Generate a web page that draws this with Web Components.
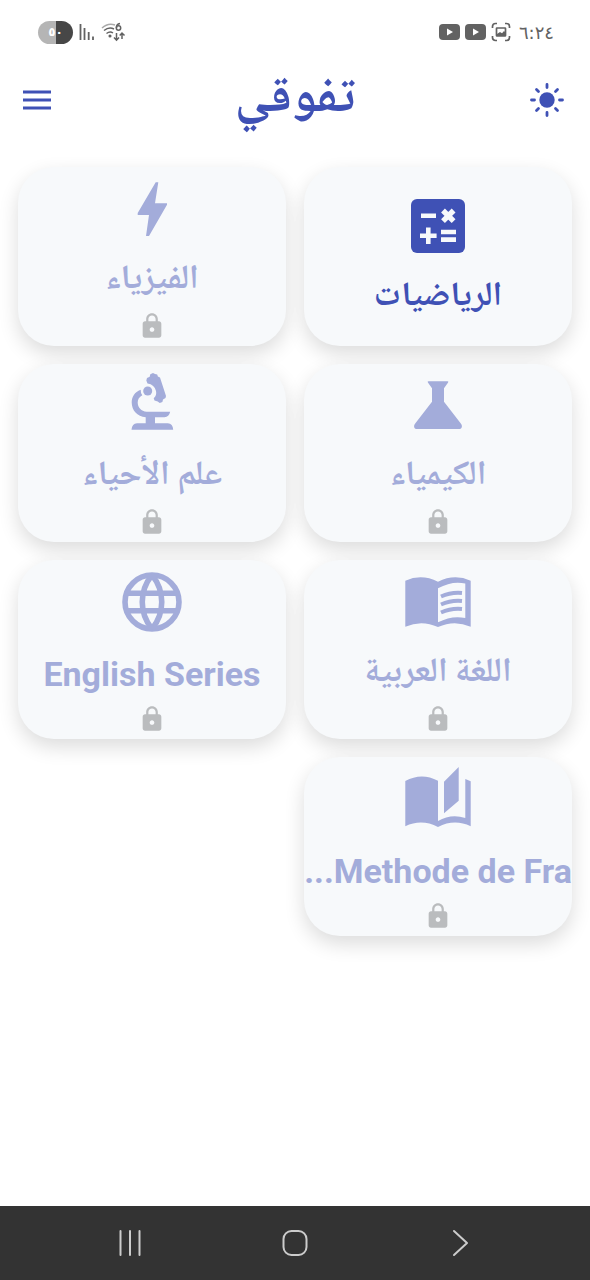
<!DOCTYPE html>
<html lang="ar" dir="rtl">
<head>
<meta charset="utf-8">
<meta name="viewport" content="width=device-width, initial-scale=1">
<title>تفوقي</title>
<style>
  body { margin: 0; background: #fff; font-family: Roboto, "Noto Naskh Arabic", "DejaVu Sans", sans-serif; }
</style>
</head>
<body>
<app-screen>
  <status-bar slot="status"></status-bar>
  <app-header slot="header">تفوقي</app-header>
  <subject-card icon="calc">الرياضيات</subject-card>
  <subject-card icon="bolt" locked>الفيزياء</subject-card>
  <subject-card icon="flask" locked>الكيمياء</subject-card>
  <subject-card icon="microscope" locked>علم الأحياء</subject-card>
  <subject-card icon="book" locked>اللغة العربية</subject-card>
  <subject-card icon="globe" locked latin>English Series</subject-card>
  <subject-card icon="stories" locked latin>...Methode de Fra</subject-card>
  <nav-bar slot="nav"></nav-bar>
</app-screen>

<script>
const define = (name, html, setup) => {
  const template = document.createElement('template');
  template.innerHTML = html;
  customElements.define(name, class extends HTMLElement {
    constructor() {
      super();
      this.attachShadow({ mode: 'open' }).append(template.content.cloneNode(true));
    }
    connectedCallback() { if (setup) setup(this, this.shadowRoot); }
  });
};

const ICONS = {
  calc: `<rect x="9" y="9" width="54" height="54" rx="6"/>
    <g fill="none" stroke="#f7f9fb" stroke-width="4.6"><path d="M19 25.7h15M39 42h15M39 49.6h15M18 45.7h16.6M26.3 37.4V54"/><path stroke-width="5.4" d="M41 20.5l10.6 10.6M51.6 20.5L41 31.1"/></g>`,
  bolt: `<path d="M39.7 9.3h2.6l-3.300 21H51v1.500L33 63h-3l3-21H21.700v-2z"/>`,
  flask: `<path d="M26.500 12.300h19q1.300 0 .6 1.200L42 19.300v13.400l17 22c2 2.900.5 5.300-2 5.300H15c-2.500 0-4-2.400-2-5.300l17-22V19.300l-4.100-5.800q-.7-1.200.6-1.200z"/>`,
  microscope: `<path d="M24.700 20.700C18.500 23 15.700 28 15.700 33.500c0 7.800 5.500 14 14 14.800v6H21q-5 .5-5.500 6.400H57.200q-.4-5.900-5.400-6.400H39v-6h9.500q4.500-.5 5.700-5.600H30.700c-5.500-.4-9-4.200-9-9.200q0-4.800 4.600-7.300-1.800-2.500-1.600-5.500z"/>
    <circle cx="31.700" cy="22" r="4.500"/>
    <path d="M31 9l2.700-1.200.6-2.600 2.700-1.300 2 1.200 2.200.5.700 2 2.100 1 6 18.500-.5 2-2.500 1.500-.6 2.500-2.700.8-2-1.500-3.200-.8-.8-2.300q3.300-3 2.300-7.300-1.500-6.500-8.500-7.500l-1.200-3z"/>`,
  book: `<path fill-rule="evenodd" d="M3.300 14.700Q19.500 7.500 36 15.700 52.500 7.500 68.700 14.700v46Q52.500 53.500 36 61 19.500 53.500 3.300 60.700zM36 22.300v34Q50 49 63.300 52V17.500Q50 14.500 36 22.300z"/>
    <g fill="none" stroke="currentColor" stroke-width="4"><path d="M39 30.500Q49 26 60 27M39 38.500Q49 34 60 35M39 46.500Q49 42 60 43"/></g>`,
  globe: `<g fill="none" stroke="currentColor" stroke-width="5.600"><circle cx="36" cy="36" r="27"/><path d="M11 27.300h50M11 44.700h50M36 9C23 25 23 47 36 63M36 9C49 25 49 47 36 63"/></g>`,
  stories: `<path d="M3.300 18Q19.500 9 36 17.700V58q13-7.500 27.300-3V16l5.400 2.300V63.300Q52.500 55.500 36 64 19.500 55.500 3.300 63.300zM42 18.700L56.700 4v33.700L42 50.300z"/>`
};

define('app-screen', `
  <style>
    :host { display: flex; flex-direction: column; min-height: 100vh; }
    main { flex: 1; display: grid; grid-template-columns: repeat(2, minmax(0, 1fr)); align-content: start; gap: 18px; padding: 31px 18px; }
  </style>
  <slot name="status"></slot>
  <slot name="header"></slot>
  <main><slot></slot></main>
  <slot name="nav"></slot>`);

define('status-bar', `
  <style>
    :host { display: flex; direction: ltr; justify-content: space-between; align-items: center; height: 64px; padding: 0 36px 0 38px; box-sizing: border-box; color: #626262; }
    div { display: flex; align-items: center; gap: 5px; }
    svg { display: block; }
    .battery { display: flex; align-items: center; justify-content: center; width: 35px; height: 23px; border-radius: 12px; color: #fff; background: linear-gradient(90deg, #b5b5b5 51%, #474747 51%); font: bold 12px "DejaVu Sans", sans-serif; }
    time { font: 18px "DejaVu Sans", sans-serif; margin-inline-start: 3px; }
  </style>
  <div>
    <span class="battery">٥٠</span>
    <svg width="18" height="20" viewBox="0 0 18 20" fill="none" stroke="currentColor" stroke-width="1.800"><path d="M2.500 2v16M6.500 6v12M10.700 10v8M15 14.500V18"/></svg>
    <svg width="25" height="22" viewBox="0 0 25 22" fill="none" stroke="currentColor" stroke-width="1.500"><path stroke="#aaa" d="M1 7Q7 1.500 14 4"/><path d="M3 9.500Q8 5.500 13 8M5.500 12.500Q9 10 12 12"/><circle cx="9" cy="15" r=".8" fill="currentColor"/><path d="M19 2.500Q15 3 15.500 7"/><circle cx="17.500" cy="7" r="2.200"/><path d="M15.500 12v7M13 16.500l2.500 2.700 2.500-2.700M21 18v-6M18.700 14.500L21 12l2.500 2.500"/></svg>
  </div>
  <div>
    <svg width="21" height="16" viewBox="0 0 21 16"><rect width="21" height="16" rx="4" fill="currentColor"/><path d="M8 4.500v7L14 8z" fill="#fff"/></svg>
    <svg width="21" height="16" viewBox="0 0 21 16"><rect width="21" height="16" rx="4" fill="currentColor"/><path d="M8 4.500v7L14 8z" fill="#fff"/></svg>
    <svg width="20" height="20" viewBox="0 0 20 20" fill="none" stroke="currentColor" stroke-width="1.700"><path d="M1.500 6V4.500q0-3 3-3H6M14 1.500h1.500q3 0 3 3V6M18.500 14v1.500q0 3-3 3H14M6 18.500H4.500q-3 0-3-3V14"/><rect x="5.500" y="6" width="9" height="8" rx=".5"/><path fill="currentColor" stroke="none" d="M6 14v-2l3-2 2 1.300 2-2.300 2 2v3z"/></svg>
    <time>٦:٢٤</time>
  </div>`);

define('app-header', `
  <style>
    :host { display: flex; align-items: center; justify-content: space-between; height: 72px; padding: 0 18px; color: #3f51b5; }
    h1 { margin: 0; font: bold 51px/72px "Noto Naskh Arabic", "DejaVu Sans", sans-serif; }
    button { display: flex; align-items: center; justify-content: center; width: 50px; height: 50px; padding: 0; border: 0; background: none; color: inherit; }
    .menu { justify-content: flex-end; padding-inline-end: 5px; }
  </style>
  <button aria-label="المظهر"><svg width="36" height="36" viewBox="-18 -18 36 36"><circle r="7.700" fill="currentColor"/><path fill="none" stroke="currentColor" stroke-width="2.800" stroke-linecap="round" d="M0-12.500v-3M0 12.500v3M-12.500 0h-3M12.500 0h3M8.500-8.500l2-2M8.500 8.500l2 2M-8.500 8.500l-2 2M-8.500-8.500l-2-2"/></svg></button>
  <h1><slot></slot></h1>
  <button class="menu" aria-label="القائمة"><svg width="28" height="20" viewBox="0 0 28 20"><path fill="none" stroke="currentColor" stroke-width="3" d="M0 2h28M0 10h28M0 18h28"/></svg></button>`);

define('subject-card', `
  <style>
    :host { display: block; aspect-ratio: 3 / 2; color: #3f51b5; }
    button { display: flex; flex-direction: column; align-items: center; justify-content: center; width: 100%; height: 100%; padding: 0; border: 0; border-radius: 36px; background: #f7f9fb; color: inherit; box-shadow: 0 8px 20px rgba(0, 0, 0, .14); }
    svg { display: block; flex: none; fill: currentColor; }
    .label { margin-top: 12px; height: 49px; font: bold 34px/49px "Noto Naskh Arabic", "DejaVu Sans", sans-serif; white-space: nowrap; }
    .lock { display: none; margin-top: 6px; color: #babcbe; }
    :host([locked]) { color: #a3acda; }
    :host([locked]) .lock { display: block; }
    :host([latin]) .label { direction: ltr; font: bold 34px/49px Roboto, sans-serif; }
  </style>
  <button>
    <svg class="icon" width="72" height="72" viewBox="0 0 72 72"></svg>
    <span class="label"><slot></slot></span>
    <svg class="lock" width="28" height="28" viewBox="0 0 24 24"><path d="M18 8h-1V6c0-2.760-2.240-5-5-5S7 3.240 7 6v2H6c-1.100 0-2 .9-2 2v10c0 1.100.9 2 2 2h12c1.100 0 2-.9 2-2V10c0-1.100-.9-2-2-2zm-6 9c-1.100 0-2-.9-2-2s.9-2 2-2 2 .9 2 2-.9 2-2 2zm3.100-9H8.900V6c0-1.710 1.390-3.100 3.100-3.100s3.100 1.390 3.100 3.100v2z"/></svg>
  </button>`, (el, root) => {
  root.querySelector('.icon').innerHTML = ICONS[el.getAttribute('icon')];
});

define('nav-bar', `
  <style>
    :host { display: block; background: #333; color: #ccc; }
    nav { direction: ltr; display: grid; grid-template-columns: repeat(3, 1fr); padding: 0 47px; height: 74px; }
    button { display: flex; align-items: center; justify-content: center; padding: 0; border: 0; background: none; color: inherit; }
    svg { fill: none; stroke: currentColor; stroke-width: 2; stroke-linecap: round; stroke-linejoin: round; }
  </style>
  <nav>
    <button aria-label="التطبيقات الأخيرة"><svg width="28" height="28" viewBox="0 0 28 28"><path d="M4.500 2v24M14 2v24M23.500 2v24"/></svg></button>
    <button aria-label="الرئيسية"><svg width="28" height="28" viewBox="0 0 28 28"><rect x="2.500" y="2" width="23" height="24" rx="8"/></svg></button>
    <button aria-label="رجوع"><svg width="28" height="28" viewBox="0 0 28 28"><path d="M8 2l13 12L8 26"/></svg></button>
  </nav>`);
</script>
</body>
</html>
